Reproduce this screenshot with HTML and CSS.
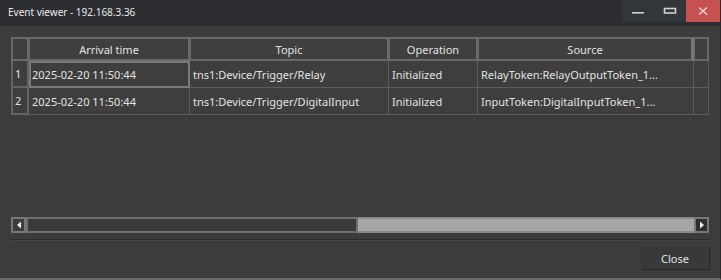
FILE: index.html
```html
<!DOCTYPE html>
<html lang="en">

<head>
    <meta charset="UTF-8">
    <meta name="viewport" content="width=device-width, initial-scale=1.0">
    <title>Event viewer</title>
    <link rel="stylesheet" href="styles.css">
</head>

<body>
    <div class="window">
        <div class="titlebar">
            <span class="title">Event viewer - 192.168.3.36</span>
            <div class="caption-btns">
                <span class="cap-btn min"><svg width="14" height="10" viewBox="0 0 14 10"><rect x="1" y="6" width="12" height="1.6" fill="#d0d0d0"/></svg></span>
                <span class="cap-btn max"><svg width="14" height="10" viewBox="0 0 14 10"><rect x="1.5" y="2.5" width="11" height="4.5" fill="none" stroke="#d0d0d0" stroke-width="1.6"/></svg></span>
                <span class="cap-btn close"><svg width="12" height="10" viewBox="0 0 12 10"><path d="M2 1.5 L10 8.5 M10 1.5 L2 8.5" stroke="#f0d6d6" stroke-width="1.4"/></svg></span>
            </div>
        </div>

        <div class="content">
            <div class="grid">
                <div class="row head">
                    <div class="cell rh"></div>
                    <div class="cell c-time">Arrival time</div>
                    <div class="cell c-topic">Topic</div>
                    <div class="cell c-op">Operation</div>
                    <div class="cell c-src">Source</div>
                    <div class="cell c-end"></div>
                </div>
                <div class="row">
                    <div class="cell rh">1</div>
                    <div class="cell c-time current">2025-02-20 11:50:44</div>
                    <div class="cell c-topic">tns1:Device/Trigger/Relay</div>
                    <div class="cell c-op">Initialized</div>
                    <div class="cell c-src">RelayToken:RelayOutputToken_1...</div>
                    <div class="cell c-end"></div>
                </div>
                <div class="row">
                    <div class="cell rh">2</div>
                    <div class="cell c-time">2025-02-20 11:50:44</div>
                    <div class="cell c-topic">tns1:Device/Trigger/DigitalInput</div>
                    <div class="cell c-op">Initialized</div>
                    <div class="cell c-src">InputToken:DigitalInputToken_1...</div>
                    <div class="cell c-end"></div>
                </div>
            </div>

            <div class="hscroll">
                <span class="sb-btn left"><svg width="6" height="8" viewBox="0 0 6 8"><path d="M5 0.5 L1 4 L5 7.5 Z" fill="#f0f0f0"/></svg></span>
                <div class="sb-track">
                    <div class="sb-empty"></div>
                    <div class="sb-thumb"></div>
                </div>
                <span class="sb-btn right"><svg width="6" height="8" viewBox="0 0 6 8"><path d="M1 0.5 L5 4 L1 7.5 Z" fill="#f0f0f0"/></svg></span>
            </div>

            <div class="sep"></div>

            <div class="footer">
                <button class="btn">Close</button>
            </div>
        </div>
    </div>
</body>

</html>
```

FILE: styles.css
```css
body {
    margin: 0;
    background-color: #3c3c3c;
    font-family: "Noto Sans", "Open Sans", sans-serif;
    font-size: 11px;
    color: #e2e2e2;
}

.window {
    width: 721px;
    height: 280px;
    display: flex;
    flex-direction: column;
    background-color: #3c3c3c;
    box-sizing: border-box;
    border-right: 1px solid #2a2a2a;
    border-bottom: 2px solid #6a6a6a;
}

.titlebar {
    height: 26px;
    display: flex;
    align-items: flex-start;
    justify-content: space-between;
    background-color: #2c2e32;
    flex-shrink: 0;
}

.title {
    padding: 5px 0 0 8px;
    font-size: 10px;
    color: #e8e8e8;
}

.caption-btns {
    display: flex;
    height: 22px;
}

.cap-btn {
    display: flex;
    align-items: center;
    justify-content: center;
    height: 22px;
}

.cap-btn.min {
    width: 32px;
    background-color: #32353a;
}

.cap-btn.max {
    width: 32px;
    background-color: #32353a;
}

.cap-btn.close {
    width: 34px;
    background-color: #c65052;
}

/* Content */
.content {
    flex: 1;
    display: flex;
    flex-direction: column;
    padding: 11px 11px 0 11px;
}

.grid {
    flex: 1;
}

.row {
    display: flex;
    height: 27px;
}

.row.head {
    height: 24px;
}

.cell {
    box-sizing: border-box;
    display: flex;
    align-items: center;
    padding: 0 3px;
    white-space: nowrap;
    overflow: hidden;
    border-right: 1px solid #5c5c5c;
    border-bottom: 1px solid #5c5c5c;
    background-color: #3e3e3e;
}

.row.head .cell {
    justify-content: center;
    border: 2px solid #696969;
    border-left: 1px solid #696969;
    background-color: #3f3f3f;
}

.rh {
    width: 18px;
    padding: 0 2px;
    border: 2px solid #636363;
    border-top: 0;
}

.row.head .rh {
    border-left: 2px solid #696969;
}

.c-time {
    width: 161px;
}

.c-topic {
    width: 199px;
}

.c-op {
    width: 89px;
}

.c-src {
    width: 216px;
}

.c-end {
    width: 15px;
}

.row.head .c-src {
    border-right: 3px solid #767676;
}

.current {
    padding-left: 1px;
    border: 2px solid #7a7a7a;
}

/* Horizontal scrollbar */
.hscroll {
    display: flex;
    height: 16px;
    flex-shrink: 0;
}

.sb-btn {
    width: 15px;
    box-sizing: border-box;
    display: flex;
    align-items: center;
    justify-content: center;
    border: 2px solid #787878;
    background-color: #3c3c3c;
}

.sb-btn.right {
    background-color: #2e2e2e;
}

.sb-track {
    flex: 1;
    display: flex;
}

.sb-empty {
    width: 332px;
    box-sizing: border-box;
    border: 2px solid #6f6f6f;
    background-color: #3a3a3a;
}

.sb-thumb {
    flex: 1;
    background-color: #a7a7a7;
    border-top: 2px solid #8a8a8a;
    border-bottom: 2px solid #8a8a8a;
}

.sep {
    margin-top: 6px;
    height: 1px;
    background-color: #2c2c2c;
    border-bottom: 1px solid #454545;
    flex-shrink: 0;
}

.footer {
    display: flex;
    justify-content: flex-end;
    padding: 6px 0 9px 0;
    flex-shrink: 0;
}

.btn {
    width: 68px;
    height: 22px;
    font-family: inherit;
    font-size: 11px;
    color: #e2e2e2;
    background-color: #393939;
    border: 0;
    box-shadow: 1px 1px 1px #2a2a2a;
}
```
